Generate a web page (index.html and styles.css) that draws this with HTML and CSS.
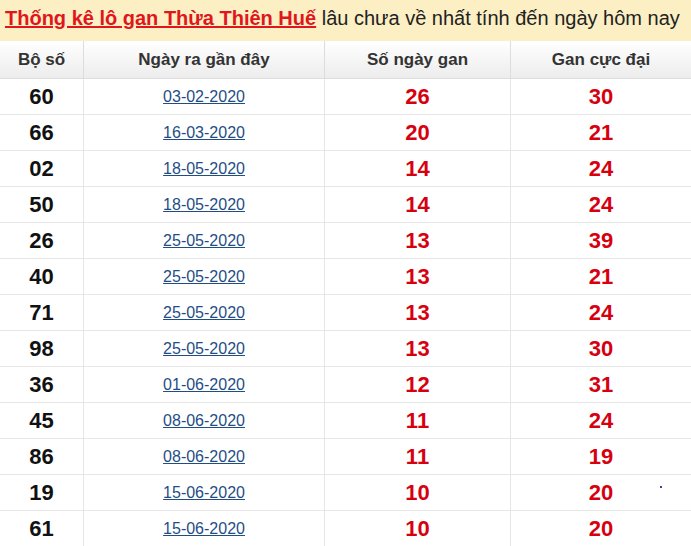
FILE: index.html
```html
<!DOCTYPE html>
<html lang="vi">
<head>
<meta charset="utf-8">
<link rel="stylesheet" href="styles.css">
</head>
<body>
<div class="title"><a href="#" class="title-link">Thống kê lô gan Thừa Thiên Huế</a> lâu chưa về nhất tính đến ngày hôm nay</div>
<table class="gan">
<thead>
<tr><th class="c1">Bộ số</th><th class="c2">Ngày ra gần đây</th><th class="c3">Số ngày gan</th><th class="c4">Gan cực đại</th></tr>
</thead>
<tbody>
<tr><td class="num">60</td><td><a href="#">03-02-2020</a></td><td class="red">26</td><td class="red">30</td></tr>
<tr><td class="num">66</td><td><a href="#">16-03-2020</a></td><td class="red">20</td><td class="red">21</td></tr>
<tr><td class="num">02</td><td><a href="#">18-05-2020</a></td><td class="red">14</td><td class="red">24</td></tr>
<tr><td class="num">50</td><td><a href="#">18-05-2020</a></td><td class="red">14</td><td class="red">24</td></tr>
<tr><td class="num">26</td><td><a href="#">25-05-2020</a></td><td class="red">13</td><td class="red">39</td></tr>
<tr><td class="num">40</td><td><a href="#">25-05-2020</a></td><td class="red">13</td><td class="red">21</td></tr>
<tr><td class="num">71</td><td><a href="#">25-05-2020</a></td><td class="red">13</td><td class="red">24</td></tr>
<tr><td class="num">98</td><td><a href="#">25-05-2020</a></td><td class="red">13</td><td class="red">30</td></tr>
<tr><td class="num">36</td><td><a href="#">01-06-2020</a></td><td class="red">12</td><td class="red">31</td></tr>
<tr><td class="num">45</td><td><a href="#">08-06-2020</a></td><td class="red">11</td><td class="red">24</td></tr>
<tr><td class="num">86</td><td><a href="#">08-06-2020</a></td><td class="red">11</td><td class="red">19</td></tr>
<tr><td class="num">19</td><td><a href="#">15-06-2020</a></td><td class="red">10</td><td class="red">20</td></tr>
<tr><td class="num">61</td><td><a href="#">15-06-2020</a></td><td class="red">10</td><td class="red">20</td></tr>
</tbody>
</table>
<span class="dot"></span>
</body>
</html>
```
FILE: styles.css
```css
html, body {
  margin: 0;
  padding: 0;
  background: #fff;
  font-family: "Liberation Sans", Arial, sans-serif;
  overflow: hidden;
}
.title {
  height: 41px;
  box-sizing: border-box;
  background: #fcefc4;
  padding: 6px 0 0 5px;
  font-size: 20px;
  line-height: 24px;
  color: #222;
  white-space: nowrap;
}
.title-link {
  color: #e0161d;
  font-weight: bold;
  text-decoration: underline;
}
.gan {
  border-collapse: collapse;
  width: 100%;
  table-layout: fixed;
}
.gan th {
  height: 37px;
  padding: 0;
  font-size: 17px;
  font-weight: bold;
  color: #333;
  background: linear-gradient(#ffffff, #ececec);
  border: 1px solid #ddd;
  border-top: none;
  text-align: center;
}
.gan th.c1 { width: 83px; border-left: none; }
.gan th.c2 { width: 240px; }
.gan th.c3 { width: 185px; }
.gan th:last-child, .gan td:last-child { border-right: none; }
.gan td {
  height: 35px;
  padding: 0;
  text-align: center;
  border: 1px solid #e6e6e6;
  font-size: 16px;
}
.gan td:first-child { border-left: none; }
.gan td.num {
  font-size: 22px;
  font-weight: bold;
  color: #111;
}
.gan td.red {
  font-size: 22px;
  font-weight: bold;
  color: #d7000f;
}
.gan td a {
  color: #1f4e86;
  text-decoration: underline;
}
.dot {
  position: absolute;
  left: 660px;
  top: 486px;
  width: 2px;
  height: 2px;
  background: #3344aa;
}
```
